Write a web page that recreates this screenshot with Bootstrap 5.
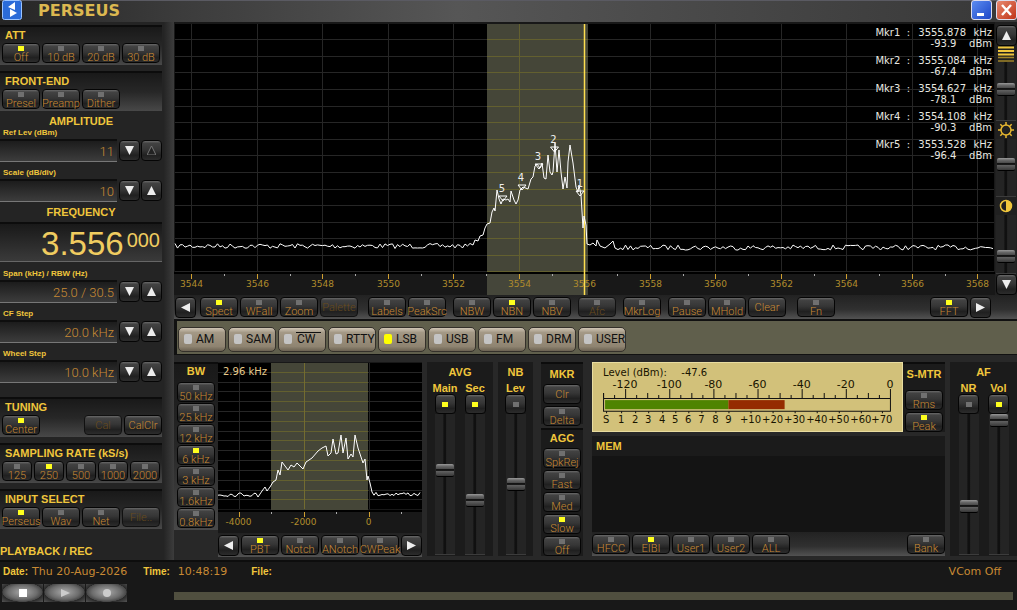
<!DOCTYPE html>
<html lang="en">
<head>
<meta charset="utf-8">
<meta name="viewport" content="width=device-width, initial-scale=1">
<title>PERSEUS</title>
<link href="https://cdn.jsdelivr.net/npm/bootstrap@5.3.0/dist/css/bootstrap.min.css" rel="stylesheet">
<style>
:root{--gold:#f0c63c;--amber:#c88a34;--led:#ffff1e}
body{background:#282828;color:var(--gold);font:11px/12px "Liberation Sans",Arial,sans-serif;min-height:100vh}
svg{display:block}
svg text,.vd{font-family:"DejaVu Sans",Verdana,sans-serif}
.titlebar{height:22px;background:linear-gradient(90deg,#262626,#3c3c3c 18%,#565656 45%,#484848 70%,#383838);box-shadow:inset 0 1px #5a5a62}
.brand{font:bold 16px/22px "DejaVu Sans",Verdana,sans-serif;color:#dcb850;margin-left:16px}
.logo{width:20px;height:20px;margin-left:2px}
.win{width:21px;height:20px;border:1px solid #dde;border-radius:3px;padding:0;line-height:0}
.win-min{background:linear-gradient(135deg,#5c8cf0,#1c46c8)}
.win-x{background:linear-gradient(135deg,#e88a70,#c03418)}
.side{width:174px;flex:none;padding-top:3px;background:linear-gradient(90deg,#242424 94%,#3c3c3c)}
.side>*{width:162px}
.head{font-weight:bold;font-size:11px;line-height:12px;margin:0;white-space:nowrap}
.panel{background:linear-gradient(#191919,#272727 50%,#484848);border-top:2px solid #0c0c0c}
.panel-s{height:40px;padding:2px 0 0 2px;margin-bottom:6px}
.panel-s .head{line-height:13px;padding-left:3px;margin-bottom:1px}
.keys{display:flex;gap:2px}
.key{display:flex;flex-direction:column;align-items:center;flex:none;width:38px;height:20px;padding:2px 0 0;border:1px solid #050505;border-radius:4px;
 background:linear-gradient(#6a6a6a,#424242 12%,#363636 45%,#202020 75%,#2c2c2c);color:var(--amber);font:300 11px/11px Roboto,"Liberation Sans",sans-serif;white-space:nowrap;overflow:visible}
.key:hover,.key:focus{color:#ffcc55}
.key::before{content:"";flex:none;width:6px;height:5px;background:#707070;margin-bottom:1px}
.key.on::before{background:var(--led)}
.key.plain{justify-content:center;padding:0}
.key.plain::before{display:none}
.key:disabled{color:#6a4c1c;border-color:#111;opacity:1}
.key.k30{width:30px}
.key.k21{width:21px;height:21px}
.key.sq{width:21px;height:20px;padding:7px 0 0}
.sep{margin-right:5px}
.arr{width:9px;height:9px;fill:#eee}
.arr-off{fill:#222;stroke:#777}
.frow{display:flex;align-items:center;gap:1px;margin-bottom:5px}
.fld{flex:1 1 0;min-width:0;height:23px;margin-right:1px;border:0;border-top:2px solid #0e0e0e;border-bottom:1px solid #777;background:linear-gradient(#1c1c1c,#3c3c3c);color:var(--amber);font:300 13px/20px Roboto,"Liberation Sans",sans-serif;text-align:right;padding:0 3px 0 0;outline:0}
.flab{display:block;font:bold 8px/12px "Liberation Sans",Arial,sans-serif;padding-left:3px;white-space:nowrap}
.freq{height:40px;margin-bottom:6px;background:linear-gradient(#191919,#3a3a3a);border-top:2px solid #0c0c0c;border-bottom:1px solid #666;color:#f0cc60;font-size:33px;line-height:40px;padding-right:2px}
.freq sup{font-size:20px;line-height:20px;top:0;margin:6px 0 0 3px}
.last{margin-bottom:14px}
.scope{background:#181818}
.marks{top:5px;right:3px;color:#e8e8e0;font-size:10px;line-height:11px}
.marks td{padding:0;text-align:right}
.marks tr:nth-child(even) td{padding-bottom:6px}
.marks td:nth-child(2){width:56px}
.marks td:last-child{width:26px}
.rail{width:22px;flex:none;background:#202020;padding-top:3px}
.tools{height:24px;gap:2px;background:linear-gradient(#222,#303030 60%,#525252)}
.tools-main{padding:0 26px 0 1px}
.modes{height:36px;background:#605f4c;border:2px solid #111;border-width:2px 0 1px 3px;gap:2px;padding:4px 0 0 1px}
.mode{width:48px;height:25px;padding:0 0 0 5px;border:1px solid #34302a;border-radius:5px;background:linear-gradient(#cfc5b5,#a39885 20%,#8f8471 80%,#6b6252);color:#111;font:12px/23px Roboto,"Liberation Sans",sans-serif;text-align:left;white-space:nowrap}
.mode::before{content:"";display:inline-block;width:8px;height:10px;border-radius:2px;background:#c4c4c4;margin-right:4px;vertical-align:-1px}
.mode.on::before{background:#ff0}
.over{display:inline-block;line-height:13px;border-top:1px solid #111;padding:0 6px 0 1px}
.deck{height:205px;padding-top:7px;background:#282828}
.bw{width:44px;padding:0 3px;height:168px;gap:1px}
.bw .head,.box .head{text-align:center}
.bw .head{padding:1px 0 4px}
.box{background:#1b1b1b}
.tall{height:194px}
.gap5{margin-left:5px}
.fader{width:30px}
input[type=range].sl{-webkit-appearance:none;appearance:none;writing-mode:vertical-lr;direction:rtl;width:20px;margin:0;background:linear-gradient(90deg,#242424 40%,#101010 44%,#101010 54%,#242424 58%);border-bottom:1px solid #3c3c3c}
.sl::-webkit-slider-thumb{-webkit-appearance:none;width:18px;height:13px;border-radius:2px;border:1px solid #000;border-width:0 0 1px;background:linear-gradient(#999,#666 20%,#444 45%,#0a0a0a 46%,#0a0a0a 54%,#666 55%,#383838)}
.sl-tall{height:141px}
.sl-rail{min-height:0;height:56px}
.meter{background:#d2c17a;border:1px solid #e8dca0;min-width:0}
.memlist{background:#141414;flex:1}
.foot{background:#181818;border-top:2px solid #0d0d0d;height:50px}
.status{height:20px;padding-left:3px}
.foot b{font-size:10px}
.foot .vd{color:var(--amber);font-size:11px}
.media{width:41px;height:18px;padding:0;border:0;border-radius:0;background:radial-gradient(ellipse at 50% 45%,#aaa 0,#6c6c6c 50%,#484848 68%,#2a2a2a 70%,#555 100%)}
.media svg{margin:auto}
.transport{width:174px;gap:1px;padding:2px 0 0 2px}
.seek{height:8px;background:#504f3f;margin:10px 4px 0 0}
</style>
</head>
<body class="d-flex flex-column">
<header class="titlebar d-flex align-items-start">
 <svg class="logo" viewBox="0 0 20 20"><rect x=".5" y=".5" width="19" height="19" rx="2" fill="#2b6bd8" stroke="#9cc4ff"/><path d="M13 2v8L6 7zM8 9v8l7-4z" fill="#fff"/></svg>
 <span class="brand">PERSEUS</span>
 <button class="btn win win-min ms-auto" aria-label="Minimize"><svg width="19" height="18"><path d="M5 12h7v3H5z" fill="#fff"/></svg></button>
 <button class="btn win win-x ms-1" aria-label="Close"><svg width="19" height="18"><path d="M5 4l9 10M14 4L5 14" stroke="#fff" stroke-width="2.4"/></svg></button>
</header>
<svg width="0" height="0" class="position-absolute"><defs>
 <symbol id="dn" viewBox="0 0 9 9"><path d="M0 0h9L4.500 9z"/></symbol>
 <symbol id="up" viewBox="0 0 9 9"><path d="M0 9h9L4.500 0z"/></symbol>
 <symbol id="lf" viewBox="0 0 9 9"><path d="M9 0v9L0 4.500z"/></symbol>
 <symbol id="rt" viewBox="0 0 9 9"><path d="M0 0v9L9 4.500z"/></symbol>
</defs></svg>

<div class="d-flex">
<aside class="side">
 <section class="panel panel-s">
  <h2 class="head">ATT</h2>
  <div class="keys"><button class="btn key on">Off</button><button class="btn key">10 dB</button><button class="btn key">20 dB</button><button class="btn key">30 dB</button></div>
 </section>
 <section class="panel panel-s mb-0">
  <h2 class="head">FRONT-END</h2>
  <div class="keys"><button class="btn key">Presel</button><button class="btn key">Preamp</button><button class="btn key">Dither</button></div>
 </section>
 <h2 class="head text-center pt-1">AMPLITUDE</h2>
 <label class="flab" for="ref">Ref Lev (dBm)</label>
 <div class="frow"><input class="fld" id="ref" value="11" readonly><button class="btn key plain k21" aria-label="Ref down"><svg class="arr"><use href="#dn"/></svg></button><button class="btn key plain k21" aria-label="Ref up"><svg class="arr arr-off"><use href="#up"/></svg></button></div>
 <label class="flab" for="scl">Scale (dB/div)</label>
 <div class="frow mb-0"><input class="fld" id="scl" value="10" readonly><button class="btn key plain k21" aria-label="Scale down"><svg class="arr"><use href="#dn"/></svg></button><button class="btn key plain k21" aria-label="Scale up"><svg class="arr"><use href="#up"/></svg></button></div>
 <h2 class="head text-center pt-1 pb-1">FREQUENCY</h2>
 <div class="freq d-flex justify-content-end"><span>3.556</span><sup>000</sup></div>
 <label class="flab" for="span">Span (kHz) / RBW (Hz)</label>
 <div class="frow"><input class="fld" id="span" value="25.0 / 30.5" readonly><button class="btn key plain k21" aria-label="Span down"><svg class="arr"><use href="#dn"/></svg></button><button class="btn key plain k21" aria-label="Span up"><svg class="arr"><use href="#up"/></svg></button></div>
 <label class="flab" for="cf">CF Step</label>
 <div class="frow"><input class="fld" id="cf" value="20.0 kHz" readonly><button class="btn key plain k21" aria-label="CF step down"><svg class="arr"><use href="#dn"/></svg></button><button class="btn key plain k21" aria-label="CF step up"><svg class="arr"><use href="#up"/></svg></button></div>
 <label class="flab" for="ws">Wheel Step</label>
 <div class="frow last"><input class="fld" id="ws" value="10.0 kHz" readonly><button class="btn key plain k21" aria-label="Wheel step down"><svg class="arr"><use href="#dn"/></svg></button><button class="btn key plain k21" aria-label="Wheel step up"><svg class="arr"><use href="#up"/></svg></button></div>
 <section class="panel panel-s">
  <h2 class="head">TUNING</h2>
  <div class="keys"><button class="btn key on me-auto">Center</button><button class="btn key plain" disabled>Cal</button><button class="btn key plain">CalClr</button></div>
 </section>
 <section class="panel panel-s">
  <h2 class="head">SAMPLING RATE (kS/s)</h2>
  <div class="keys"><button class="btn key k30">125</button><button class="btn key k30 on">250</button><button class="btn key k30">500</button><button class="btn key k30">1000</button><button class="btn key k30">2000</button></div>
 </section>
 <section class="panel panel-s mb-0">
  <h2 class="head">INPUT SELECT</h2>
  <div class="keys"><button class="btn key on">Perseus</button><button class="btn key">Wav</button><button class="btn key">Net</button><button class="btn key plain" disabled>File..</button></div>
 </section>
 <h2 class="head pt-3">PLAYBACK / REC</h2>
</aside>

<main class="flex-grow-1" style="min-width:0">
 <div class="d-flex">
  <div class="scope position-relative flex-grow-1" style="min-width:0">
   <svg id="main" width="100%" viewBox="174 22 821 273" role="img" aria-label="Main spectrum"></svg>
   <table class="marks vd position-absolute"><tbody>
    <tr><td>Mkr1&nbsp; :</td><td>3555.878</td><td>kHz</td></tr><tr><td></td><td>-93.9 &nbsp;&nbsp;</td><td>dBm</td></tr>
    <tr><td>Mkr2&nbsp; :</td><td>3555.084</td><td>kHz</td></tr><tr><td></td><td>-67.4 &nbsp;&nbsp;</td><td>dBm</td></tr>
    <tr><td>Mkr3&nbsp; :</td><td>3554.627</td><td>kHz</td></tr><tr><td></td><td>-78.1 &nbsp;&nbsp;</td><td>dBm</td></tr>
    <tr><td>Mkr4&nbsp; :</td><td>3554.108</td><td>kHz</td></tr><tr><td></td><td>-90.3 &nbsp;&nbsp;</td><td>dBm</td></tr>
    <tr><td>Mkr5&nbsp; :</td><td>3553.528</td><td>kHz</td></tr><tr><td></td><td>-96.4 &nbsp;&nbsp;</td><td>dBm</td></tr>
   </tbody></table>
  </div>
  <div class="rail d-flex flex-column align-items-center">
   <button class="btn key plain k21" aria-label="Rail up"><svg class="arr"><use href="#up"/></svg></button>
   <svg width="18" height="16"><path d="M1 1.500h16M1 5h16M1 8.500h16" stroke="#f0c63c" stroke-width="2"/><path d="M1 11.500h16M1 15h16" stroke="#a08428" stroke-width="1.500"/></svg>
   <input class="sl sl-rail flex-fill" type="range" value="54" aria-label="Waterfall">
   <svg width="18" height="18" fill="none" stroke="#e8b830" stroke-width="1.500"><circle cx="9" cy="9" r="5"/><path d="M9 1v3M9 14v3M1 9h3M14 9h3M3.300 3.300l2 2M12.700 12.700l2 2M3.300 14.700l2-2M12.700 5.300l2-2"/></svg>
   <input class="sl sl-rail flex-fill" type="range" value="56" aria-label="Brightness">
   <svg width="18" height="18"><circle cx="9" cy="9" r="5.500" fill="none" stroke="#f0c63c" stroke-width="1.500"/><path d="M9 3.500a5.500 5.500 0 0 1 0 11z" fill="#f0c63c"/></svg>
   <input class="sl sl-rail flex-fill" type="range" value="22" aria-label="Contrast">
   <button class="btn key plain k21" aria-label="Rail down"><svg class="arr"><use href="#dn"/></svg></button>
  </div>
 </div>

 <div class="tools tools-main d-flex align-items-center">
  <button class="btn key plain k21" aria-label="Scroll left"><svg class="arr"><use href="#lf"/></svg></button><span></span>
  <button class="btn key on">Spect</button><button class="btn key">WFall</button><button class="btn key">Zoom</button><button class="btn key plain me-2" disabled>Palette</button>
  <button class="btn key">Labels</button><button class="btn key sep">PeakSrc</button>
  <button class="btn key">NBW</button><button class="btn key on">NBN</button><button class="btn key sep">NBV</button>
  <button class="btn key sep" disabled>Afc</button><button class="btn key sep">MkrLog</button>
  <button class="btn key">Pause</button><button class="btn key">MHold</button><button class="btn key plain sep">Clear</button>
  <button class="btn key ms-1">Fn</button>
  <button class="btn key on ms-auto">FFT</button><button class="btn key plain k21" aria-label="Scroll right"><svg class="arr"><use href="#rt"/></svg></button>
 </div>

 <div class="modes d-flex align-items-center">
  <button class="btn mode">AM</button><button class="btn mode">SAM</button><button class="btn mode"><span class="over">CW</span></button><button class="btn mode">RTTY</button><button class="btn mode on">LSB</button><button class="btn mode">USB</button><button class="btn mode">FM</button><button class="btn mode">DRM</button><button class="btn mode">USER</button>
 </div>

 <div class="deck d-flex align-items-start">
  <section class="panel bw d-flex flex-column">
   <h2 class="head">BW</h2>
   <button class="btn key">50 kHz</button><button class="btn key">25 kHz</button><button class="btn key">12 kHz</button><button class="btn key on">6 kHz</button><button class="btn key">3 kHz</button><button class="btn key">1.6kHz</button><button class="btn key">0.8kHz</button>
  </section>
  <section style="width:204px">
   <div class="scope"><svg id="sec" width="100%" viewBox="218 362 204 171" role="img" aria-label="Secondary spectrum"></svg></div>
   <div class="tools d-flex align-items-center">
    <button class="btn key plain k21" aria-label="Shift left"><svg class="arr"><use href="#lf"/></svg></button>
    <button class="btn key on">PBT</button><button class="btn key">Notch</button><button class="btn key">ANotch</button><button class="btn key">CWPeak</button>
    <button class="btn key plain k21" aria-label="Shift right"><svg class="arr"><use href="#rt"/></svg></button>
   </div>
  </section>
  <section class="box tall gap5 pt-1" style="width:66px">
   <h2 class="head">AVG</h2>
   <div class="d-flex justify-content-center pt-1">
    <div class="fader d-flex flex-column align-items-center"><label class="head" for="am">Main</label><button class="btn key sq on" aria-label="Main averaging"></button><input id="am" class="sl sl-tall" type="range" value="61"></div>
    <div class="fader d-flex flex-column align-items-center"><label class="head" for="as">Sec</label><button class="btn key sq on" aria-label="Secondary averaging"></button><input id="as" class="sl sl-tall" type="range" value="37"></div>
   </div>
  </section>
  <section class="box tall gap5 pt-1" style="width:35px">
   <h2 class="head">NB</h2>
   <div class="d-flex flex-column align-items-center pt-1"><label class="head" for="nb">Lev</label><button class="btn key sq" aria-label="Noise blanker"></button><input id="nb" class="sl sl-tall" type="range" value="50"></div>
  </section>
  <div class="ms-2" style="width:42px">
   <section class="box panel pt-1 mb-1" style="height:62px"><h2 class="head">MKR</h2><div class="keys flex-column align-items-center pt-1"><button class="btn key plain">Clr</button><button class="btn key">Delta</button></div></section>
   <section class="box panel" style="padding-top:2px"><h2 class="head">AGC</h2><div class="keys flex-column align-items-center pt-1"><button class="btn key">SpkRej</button><button class="btn key">Fast</button><button class="btn key">Med</button><button class="btn key on">Slow</button><button class="btn key">Off</button></div></section>
  </div>
  <div class="flex-grow-1 gap5 ps-1 tall d-flex flex-column" style="min-width:0">
   <div class="d-flex mb-1">
    <div class="meter flex-grow-1"><svg id="lev" width="100%" viewBox="594 363 308 66" role="img" aria-label="Signal level"></svg></div>
    <section class="panel box keys flex-column align-items-center" style="width:42px"><h2 class="head pt-1 mb-1">S-MTR</h2><button class="btn key mt-1">Rms</button><button class="btn key on">Peak</button></section>
   </div>
   <section class="box flex-grow-1 d-flex flex-column">
    <h2 class="head text-start p-1">MEM</h2>
    <div class="memlist"></div>
    <div class="tools d-flex align-items-center"><button class="btn key">HFCC</button><button class="btn key on">EIBI</button><button class="btn key">User1</button><button class="btn key">User2</button><button class="btn key">ALL</button><button class="btn key ms-auto">Bank</button></div>
   </section>
  </div>
  <section class="box tall gap5 pt-1" style="width:67px">
   <h2 class="head">AF</h2>
   <div class="d-flex justify-content-center pt-1">
    <div class="fader d-flex flex-column align-items-center"><label class="head" for="nr">NR</label><button class="btn key sq" aria-label="Noise reduction"></button><input id="nr" class="sl sl-tall" type="range" value="32"></div>
    <div class="fader d-flex flex-column align-items-center"><label class="head" for="vol">Vol</label><button class="btn key sq on" aria-label="Audio on"></button><input id="vol" class="sl sl-tall" type="range" value="100"></div>
   </div>
  </section>
 </div>
</main>
</div>

<footer class="foot flex-grow-1">
 <div class="status d-flex align-items-center">
  <b class="me-1">Date:</b><span class="vd me-3">Thu 20-Aug-2026</span><b class="me-2">Time:</b><span class="vd me-4">10:48:19</span><b>File:</b><span class="vd ms-auto me-3">VCom Off</span>
 </div>
 <div class="d-flex align-items-start">
  <div class="transport d-flex">
   <button class="btn media" aria-label="Stop"><svg width="14" height="14"><path d="M3 3h8v8H3z" fill="#fff"/></svg></button>
   <button class="btn media" aria-label="Play"><svg width="14" height="14"><path d="M3 3l9 4-9 4z" fill="#ccc"/></svg></button>
   <button class="btn media" aria-label="Record"><svg width="14" height="14"><circle cx="7" cy="7" r="4" fill="#ccc"/></svg></button>
  </div>
  <div class="seek flex-grow-1"></div>
 </div>
</footer>

<script src="https://cdn.jsdelivr.net/npm/bootstrap@5.3.0/dist/js/bootstrap.bundle.min.js"></script>
<script>
const line=(x1,y1,x2,y2,c,w=1)=>`<path d="M${x1} ${y1}L${x2} ${y2}" stroke="${c}" stroke-width="${w}" fill="none"/>`;
const rect=(x,y,w,h,c)=>`<rect x="${x}" y="${y}" width="${w}" height="${h}" fill="${c}"/>`;
const label=(x,y,s,c,size=10,a='middle')=>`<text x="${x}" y="${y}" fill="${c}" font-size="${size}" text-anchor="${a}">${s}</text>`;
let seed=7;
const rnd=()=>(seed=(seed*16807)%2147483647)/2147483647-.5;
// noise floor between two x positions
function floor(x0,x1,y,step,amp){const p=[];for(let x=x0;x<x1;x+=step)p.push([x,(y+rnd()*amp).toFixed(1)]);return p}
const trace=p=>`<polyline points="${p.map(q=>q.join()).join(' ')}" fill="none" stroke="#fff" stroke-width="1"/>`;

// main spectrum
let s=rect(175,24,819,248,'#000');
const gx=[],gy=[39.5,56.5,72.5,89.5,106.5,122.5,139.5,155.5,172.5,189.5,205.5,222.5,238.5,255.5,271.5];
for(let i=0;i<13;i++)gx.push(Math.round(191+i*65.5)+.5);
gx.forEach(x=>s+=line(x,24,x,272,'#262626'));
gy.forEach(y=>s+=line(175,y,994,y,'#262626'));
s+=rect(487,24,101,248,'#454638')+rect(487,274,101,21,'#45463a');
gy.forEach(y=>s+=line(487,y,588,y,'#63602f'));
s+=line(519.5,24,519.5,272,'#63602f')+rect(174,272,821,2,'#000');
gx.forEach((x,i)=>{s+=line(x,274,x,279,'#d0a030')+label(x,287,3544+2*i,'#b08c2c',9);if(i<12)s+=line(x+33,274,x+33,276,'#aaa')});
s+=line(584.5,24,584.5,295,'#ffdf50',1.5);
s+=trace([...floor(175,472,246,2.5,5),[473,245],[475,240],[478,241],[480,236],[483,235],[485,228],[487,224],[490,223],[492,212],[494,208],[495,211],[497,190],[499,199],[501,204],[503,199],[506,200],[508,199],[510,202],[511,191],[514,200],[516,204],[518,200],[520,190],[523,187],[528,189],[531,179],[533,177],[535,166],[537,164],[540,168],[542,163],[544,178],[546,179],[548,155],[550,172],[552,175],[553,172],[555,143],[557,172],[559,150],[561,172],[563,189],[565,177],[567,188],[568,162],[570,145],[573,163],[576,187],[578,192],[579,185],[581,195],[583,228],[584,216],[586,225],[587,244],[590,245],[593,243],[596,246],[597,240],[600,246],[605,248],[610,244],[613,241],[615,248],...floor(618,994,247.5,2.5,5)]);
[[580,194,1],[554.5,150,2],[539,167,3],[522,188,4],[503,199,5]].forEach(([x,y,n])=>{
 s+=`<path d="M${x-4} ${y-3}h8l-4 5z" fill="none" stroke="#fff"/>`+label(x-(n>1?1:0),y-7,n,'#eee')});
document.getElementById('main').innerHTML=s;

// secondary spectrum
s=rect(218,363,204,146,'#000');
[239.5,304.5,369.5].forEach(x=>s+=line(x,363,x,509,'#262626'));
const hy=[];for(let i=0;i<14;i++)hy.push(Math.round(372.7+i*9.82)-.5);
hy.forEach(y=>s+=line(218,y,422,y,'#262626'));
s+=rect(271,363,97,147,'#454638');
hy.forEach(y=>s+=line(271,y,368,y,'#63602f'));
s+=line(304.5,363,304.5,509,'#736c30')+line(218,511,422,511,'#000',2);
[[239.5,-4000],[304.5,-2000],[369.5,0]].forEach(([x,n])=>s+=line(x,512,x,517,'#d0a030')+label(x-1,525,n,'#b08c2c',9));
[271.5,336.5,401.5].forEach(x=>s+=line(x,512,x,514,'#aaa'));
s+=label(223,375,'2.96 kHz','#e8cc8c',10,'start');
s+=trace([...floor(218,257,494.5,2,4),[258,497],[262,491],[265,487],[267,491],[270,487],[273,482],[276,480],[278,470],[280,475],[282,462],[285,466],[288,470],[291,465],[294,467],[297,463],[300,466],[303,469],[306,462],[312,458],[318,451],[322,448],[326,446],[328,456],[331,453],[333,439],[336,454],[338,453],[341,435],[343,453],[346,438],[348,459],[351,454],[353,457],[355,435],[358,448],[361,457],[363,463],[365,459],[367,480],[368,476],[370,483],[372,492],...floor(374,422,494,2,4)]);
document.getElementById('sec').innerHTML=s;

// level meter
s=rect(606,400,123,9,'#4f8400')+rect(729,400,56,9,'#952c00')+`<path d="M604.500 393v18h286v-22M604.500 398.500h286" fill="none" stroke="#111"/>`;
for(let i=0;i<26;i++){const x=Math.round(604+i*11)+.5,m=i%4;s+=line(x,m==2?389:m==0?393:395,x,398,'#111')}
[-120,-100,-80,-60,-40,-20,0].forEach((n,i)=>s+=label(626+i*44,388,n,'#181400',11));
s+=label(604,376,'Level (dBm):','#181400',10,'start')+label(682,376,'-47.6','#181400',10,'start');
[['S',607],[1,622],[2,636],[3,649],[4,663],[5,676],[6,689],[7,702],[8,716],[9,729],['+10',751],['+20',773],['+30',795],['+40',817],['+50',839],['+60',861],['+70',882]].forEach(([t,x])=>s+=label(x,423,t,'#181400')+line(x+.5,411,x+.5,413,'#111'));
document.getElementById('lev').innerHTML=s;
</script>
</body>
</html>
